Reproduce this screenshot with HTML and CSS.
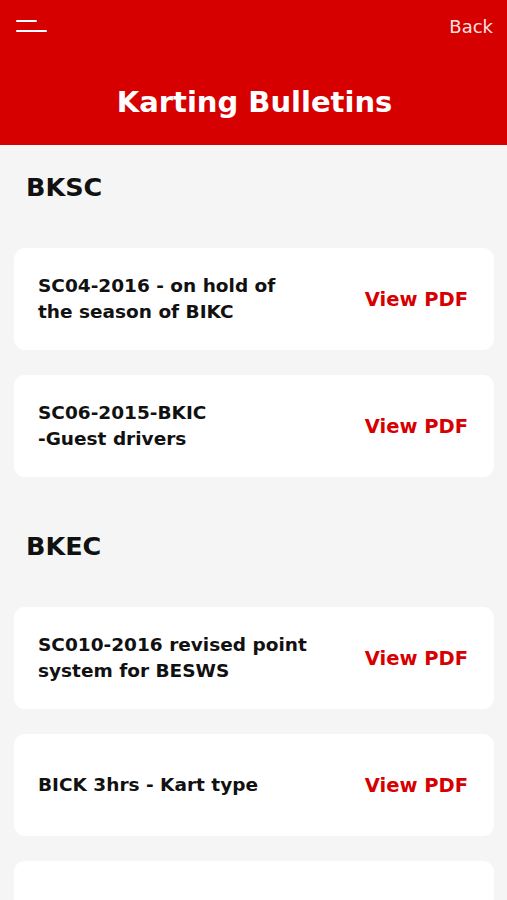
FILE: index.html
```html
<!DOCTYPE html>
<html lang="en">
<head>
    <meta charset="UTF-8" />
    <meta name="viewport" content="width=device-width, initial-scale=1.0">
    <title>Karting Bulletins</title>
    <link rel="stylesheet" href="styles.css">
</head>
<body>
    <header class="top-bar">
        <div class="nav-row">
            <button class="menu-btn" aria-label="Menu">
                <span class="line short"></span>
                <span class="line"></span>
            </button>
            <a class="back-link" href="#">Back</a>
        </div>
        <h1>Karting Bulletins</h1>
    </header>

    <main class="content">
        <section class="group">
            <h2>BKSC</h2>
            <div class="card">
                <p class="card-title">SC04-2016 - on hold of<br>the season of BIKC</p>
                <a class="pdf-link" href="#">View PDF</a>
            </div>
            <div class="card">
                <p class="card-title">SC06-2015-BKIC<br>-Guest drivers</p>
                <a class="pdf-link" href="#">View PDF</a>
            </div>
        </section>

        <section class="group">
            <h2>BKEC</h2>
            <div class="card">
                <p class="card-title">SC010-2016 revised point<br>system for BESWS</p>
                <a class="pdf-link" href="#">View PDF</a>
            </div>
            <div class="card">
                <p class="card-title">BICK 3hrs - Kart type</p>
                <a class="pdf-link" href="#">View PDF</a>
            </div>
            <div class="card">
                <p class="card-title"></p>
            </div>
        </section>
    </main>
</body>
</html>
```

FILE: styles.css
```css
body {
    margin: 0;
    font-family: "DejaVu Sans", Arial, sans-serif;
    background-color: #f5f5f5;
    color: #111;
}

.top-bar {
    background-color: #d70000;
    height: 145px;
    box-sizing: border-box;
    padding: 12px 14px 0 16px;
}

.nav-row {
    display: flex;
    justify-content: space-between;
    align-items: center;
    height: 28px;
}

.menu-btn {
    display: flex;
    flex-direction: column;
    gap: 8px;
    padding: 0;
    border: none;
    background: none;
    width: 31px;
}

.menu-btn .line {
    display: block;
    height: 2px;
    width: 31px;
    background-color: #fff;
    border-radius: 1px;
}

.menu-btn .line.short {
    width: 21px;
}

.back-link {
    color: rgba(255,255,255,0.9);
    text-decoration: none;
    font-size: 18px;
}

h1 {
    margin: 44px 0 0;
    color: #fff;
    text-align: center;
    font-size: 29px;
    font-weight: bold;
    line-height: 36px;
}

.content {
    padding: 0 13px 0 14px;
}

.group h2 {
    margin: 52px 0 44px 12px;
    font-size: 25.5px;
    line-height: 34px;
    font-weight: bold;
}

.group:first-child h2 {
    margin-top: 25px;
}

.card {
    display: flex;
    justify-content: space-between;
    align-items: center;
    height: 102px;
    box-sizing: border-box;
    padding: 0 26px 0 24px;
    margin-bottom: 25px;
    background-color: #fff;
    border-radius: 11px;
}

.card-title {
    margin: 0;
    font-size: 18.5px;
    font-weight: bold;
    line-height: 26px;
}

.pdf-link {
    color: #d70000;
    text-decoration: none;
    font-size: 19.5px;
    font-weight: bold;
}
```
